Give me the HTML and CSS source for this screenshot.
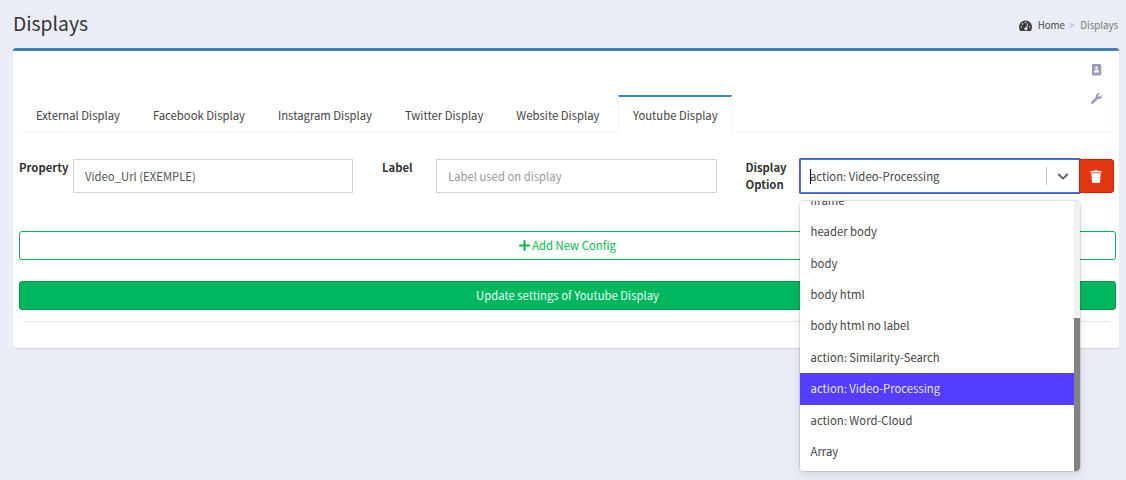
FILE: index.html
```
<!DOCTYPE html>
<html lang="en">
<head>
<meta charset="utf-8">
<title>Displays</title>
<link rel="stylesheet" href="styles.css">
</head>
<body>
<header class="page-header">
  <h1 class="page-title">Displays</h1>
  <nav class="breadcrumb">
    <svg class="gauge" viewBox="0 0 13 11"><path fill="#3b3b3b" d="M1 10.500A6.500 6.500 0 1 1 12 10.500Q11.800 11 11.400 11H1.600Q1.200 11 1 10.500Z"/><g fill="#eaedf5"><circle cx="2.300" cy="7" r=".8"/><circle cx="3.500" cy="3.900" r=".8"/><circle cx="6.500" cy="2.500" r=".8"/><circle cx="10.700" cy="7" r=".8"/><path d="M8.600 3.200l.8.300-1.500 4.100a1.500 1.500 0 1 1-.9-.3z"/></g></svg>
    <span class="crumb-home">Home</span><span class="crumb-sep">&gt;</span><span class="crumb-current">Displays</span>
  </nav>
</header>
<main class="box">
  <div class="tools">
    <svg class="tool-icon" viewBox="0 0 10 12"><path fill="#9a9cbd" d="M1 0h7q1 0 1 1v1h.5v2H9v1h.5v2H9v1h.5v2H9v.5q0 1-1 1H1q-1 0-1-1V1q0-1 1-1z"/><circle cx="4.500" cy="4" r="1.400" fill="#fff"/><path fill="#fff" d="M2 8.500V7.300Q2.200 6 3.400 6h2.200Q6.800 6 7 7.300v1.200z"/></svg>
    <svg class="tool-icon tool-wrench" viewBox="0 0 512 512"><path fill="#9a9cbd" d="M507.700 109.100c-2.200-9-13.500-12.100-20.100-5.500l-74.400 74.400-67.900-11.300L334 98.900l74.400-74.400c6.600-6.600 3.400-17.900-5.700-20.200-47.400-11.700-99.600.9-136.600 37.900-39.600 39.600-50.500 97.100-34.100 147.200L18.700 402.800c-25 25-25 65.500 0 90.500s65.500 25 90.500 0l213.200-213.200c50.100 16.700 107.500 5.700 147.400-34.200 37.100-37.100 49.700-89.300 37.900-136.800z"/></svg>
  </div>
  <section class="tab-box">
    <ul class="tabs">
      <li class="tab">External Display</li>
      <li class="tab">Facebook Display</li>
      <li class="tab">Instagram Display</li>
      <li class="tab">Twitter Display</li>
      <li class="tab">Website Display</li>
      <li class="tab tab-active">Youtube Display</li>
    </ul>
    <div class="form">
      <div class="row">
        <label class="label">Property</label>
        <input class="input" type="text" value="Video_Url (EXEMPLE)">
        <label class="label">Label</label>
        <input class="input" type="text" placeholder="Label used on display">
        <label class="label">Display Option</label>
        <div class="select">
          <div class="control">
            <span class="caret"></span>
            <span class="value">action: Video-Processing</span>
            <span class="divider"></span>
            <svg class="chevron" viewBox="0 0 20 20"><path fill="#666" d="M4.516 7.548c.436-.446 1.043-.481 1.576 0L10 11.295l3.908-3.747c.533-.481 1.141-.446 1.574 0 .436.445.408 1.197 0 1.615-.406.418-4.695 4.502-4.695 4.502a1.095 1.095 0 0 1-1.576 0S4.924 9.581 4.516 9.163s-.436-1.170 0-1.615z"/></svg>
          </div>
          <div class="menu">
            <ul class="options">
              <li class="option">iframe</li>
              <li class="option">header body</li>
              <li class="option">body</li>
              <li class="option">body html</li>
              <li class="option">body html no label</li>
              <li class="option">action: Similarity-Search</li>
              <li class="option option-selected">action: Video-Processing</li>
              <li class="option">action: Word-Cloud</li>
              <li class="option">Array</li>
            </ul>
            <div class="track"><div class="thumb"></div></div>
          </div>
        </div>
        <button class="delete" aria-label="Delete"><svg class="trash" viewBox="0 0 12 13"><path fill="#fff" d="M.5 1h3L4.200.2h3.600L8.500 1h3v1.500H.5zM1.200 3.300h9.600L10 12q-.1.900-1 .9H3q-.9 0-1-.9z"/></svg></button>
      </div>
      <button class="button button-add"><svg class="plus" viewBox="0 0 11 11"><path stroke="#00b74f" stroke-width="2" stroke-linecap="round" d="M5.500 1v9M1 5.500h9"/></svg>Add New Config</button>
      <button class="button button-update">Update settings of Youtube Display</button>
    </div>
  </section>
</main>
</body>
</html>
```
FILE: styles.css
```
* { box-sizing: border-box; }
body {
  margin: 0;
  height: 480px;
  overflow: hidden;
  background: #eaedf5;
  color: #444;
  font: 11.300px/18px "Noto Sans CJK SC", "Open Sans", sans-serif;
}
ul { list-style: none; margin: 0; padding: 0; }
button, input { font: inherit; }
.page-header {
  height: 48px;
  padding: 0 8px 0 13px;
  display: flex;
  justify-content: space-between;
}
.page-title { margin: 0; padding-top: 9px; font-size: 19.300px; font-weight: 400; line-height: 28px; color: #333; }
.breadcrumb { display: flex; align-items: center; height: 18px; margin-top: 16px; font-size: 9.700px; }
.gauge { width: 13px; height: 11px; margin-right: 6px; }
.crumb-sep { color: #bbb; font-size: 9.700px; margin: 0 6px 0 4px; }
.crumb-current { color: #777; }
.box {
  width: 1106px;
  height: 300px;
  margin-left: 13px;
  border-top: 3px solid #4080bf;
  border-radius: 3px;
  background: #fff;
  box-shadow: 0 1px 1px rgba(0,0,0,.1);
}
.tools { height: 44px; padding: 13px 17px 0 0; display: flex; flex-direction: column; align-items: flex-end; gap: 17px; }
.tool-icon { width: 10px; height: 12px; flex: none; }
.tool-wrench { width: 11px; height: 11px; }
.tab-box {
  width: 1089px;
  height: 226px;
  margin-left: 9px;
  border-radius: 3px;
  box-shadow: 0 1px 1px rgba(0,0,0,.1);
}
.tabs { display: flex; height: 38px; border-bottom: 1px solid #f4f4f4; }
.tab { height: 38px; padding: 9px 14px 0; margin-right: 5px; border-top: 2px solid transparent; }
.tab-active { border: 1px solid #f4f4f4; border-width: 2px 1px 0; border-top-color: #4080bf; background: #fff; padding: 9px 13.500px 0; }
.form { margin: 0 -6px 0 -3px; }
.row { display: grid; grid-template-columns: 54px 280px 83px 281px 82px 280px 35px; height: 98px; padding-top: 26px; align-items: start; }
.label { font-weight: 700; line-height: 17px; color: #333; }
.label:nth-of-type(n+2) { padding-left: 29px; }
.label:nth-of-type(3) { padding-left: 28.500px; }
.input { width: 100%; height: 34px; padding: 0 11px; border: 1px solid #d2d2e0; border-radius: 0; color: #555; background: #fff; }
.input::placeholder { color: #999; opacity: 1; }
.select { position: relative; }
.control { display: flex; align-items: center; height: 36px; padding: 0 8px 0 10px; border: 1px solid #5a50ef; box-shadow: inset 0 0 0 1px #4080bf; border-radius: 1px; width: 282px; margin-top: -1px; background: #fff; }
.caret { width: 1px; height: 15px; background: #111; margin-right: -1px; }
.value { flex: 1; }
.divider { width: 1px; height: 18px; background: #ccc; margin-right: 7px; }
.chevron { width: 18px; height: 18px; }
.delete { height: 34px; width: 35px; padding: 0 1px 0 0; border: 1px solid #d91d00; border-radius: 0 3px 3px 0; background: #e1360f; display: flex; align-items: center; justify-content: center; position: relative; }
.trash { width: 12px; height: 13px; }
.menu {
  position: absolute;
  z-index: 3;
  top: 42px;
  left: 1px;
  width: 280px;
  height: 270px;
  display: flex;
  overflow: hidden;
  background: #fff;
  border-radius: 4px;
}
.select::after { content: ""; position: absolute; z-index: 2; top: 42px; left: 1px; width: 280px; height: 270px; border-radius: 4px; box-shadow: 0 0 0 1px rgba(0,0,0,.1), 0 4px 11px rgba(0,0,0,.1); }
.options { flex: 1; margin-top: -16px; }
.option { height: 31.400px; padding: 5.800px 10.600px 0; }
.option-selected { background: #543dff; color: #e8e5ff; }
.track { width: 6px; background: #f0f0f0; padding-top: 117px; }
.thumb { height: 153px; background: #828282; }
.button { display: flex; align-items: center; justify-content: center; width: 1097px; height: 29px; padding: 0 0 1px; border-radius: 3px; }
.button-add { border: 1px solid #12ae57; background: #fff; color: #00bb4f; }
.button-update { margin-top: 21px; border: 1px solid #06994c; background: #00b75f; color: #eafff2; }
.plus { width: 11px; height: 11px; margin-right: 2px; }
```
